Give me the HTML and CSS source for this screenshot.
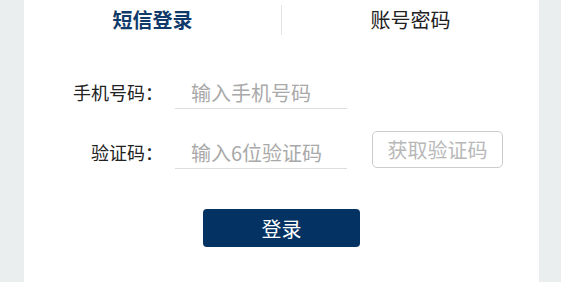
FILE: index.html
```html
<!DOCTYPE html>
<html lang="zh-CN">
<head>
<meta charset="utf-8">
<title>登录</title>
<link rel="stylesheet" href="styles.css">
</head>
<body>
<div class="card">
  <div class="tabs">
    <div class="tab active">短信登录</div>
    <div class="tab-divider"></div>
    <div class="tab">账号密码</div>
  </div>
  <form class="form">
    <div class="row">
      <label class="label">手机号码<span class="colon">：</span></label>
      <input class="field" type="text" placeholder="输入手机号码">
    </div>
    <div class="row row-code">
      <label class="label">验证码<span class="colon">：</span></label>
      <input class="field" type="text" placeholder="输入6位验证码">
      <button type="button" class="code-btn">获取验证码</button>
    </div>
    <div class="actions">
      <button type="button" class="login-btn">登录</button>
    </div>
  </form>
</div>
</body>
</html>
```

FILE: styles.css
```css
html, body {
  margin: 0;
  padding: 0;
  height: 100%;
}
body {
  background: #eaeeef;
  font-family: "Noto Sans CJK SC", "Noto Sans", sans-serif;
  color: #222;
}
.card {
  margin: 0 22px 0 24px;
  width: 515px;
  height: 100%;
  background: #ffffff;
}
.tabs {
  display: flex;
  align-items: center;
  height: 40px;
}
.tab {
  flex: 1;
  text-align: center;
  font-size: 20px;
  line-height: 40px;
  color: #222;
}
.tab.active {
  font-weight: bold;
  color: #0f3a69;
}
.tab-divider {
  width: 1px;
  height: 30px;
  background: #e2e2e2;
}
.form {
  margin: 0;
  padding-top: 37px;
}
.row {
  display: flex;
  align-items: flex-end;
}
.row-code {
  margin-top: 22px;
}
.label {
  width: 139px;
  text-align: right;
  font-size: 18px;
  line-height: 31px;
  height: 32px;
  color: #222;
  margin-right: 12px;
}
.colon {
  font-family: "Noto Sans CJK JP", sans-serif;
}
.field {
  box-sizing: border-box;
  width: 172px;
  height: 32px;
  margin: 0;
  padding: 0 0 0 16px;
  border: none;
  border-bottom: 1px solid #dddddd;
  outline: none;
  font-family: inherit;
  font-size: 20px;
  line-height: 31px;
  color: #222;
  background: transparent;
}
.field::placeholder {
  color: #a9a9a9;
}
.code-btn {
  box-sizing: border-box;
  margin: 0 0 1px 25px;
  width: 131px;
  height: 37px;
  padding: 0;
  border: 1px solid #cccccc;
  border-radius: 5px;
  background: #ffffff;
  font-family: inherit;
  font-size: 20px;
  color: #b8b8b8;
}
.actions {
  display: flex;
  justify-content: center;
  margin-top: 40px;
}
.login-btn {
  width: 157px;
  height: 38px;
  padding: 0;
  border: none;
  border-radius: 4px;
  background: #033263;
  color: #ffffff;
  font-family: inherit;
  font-size: 20px;
}
```
